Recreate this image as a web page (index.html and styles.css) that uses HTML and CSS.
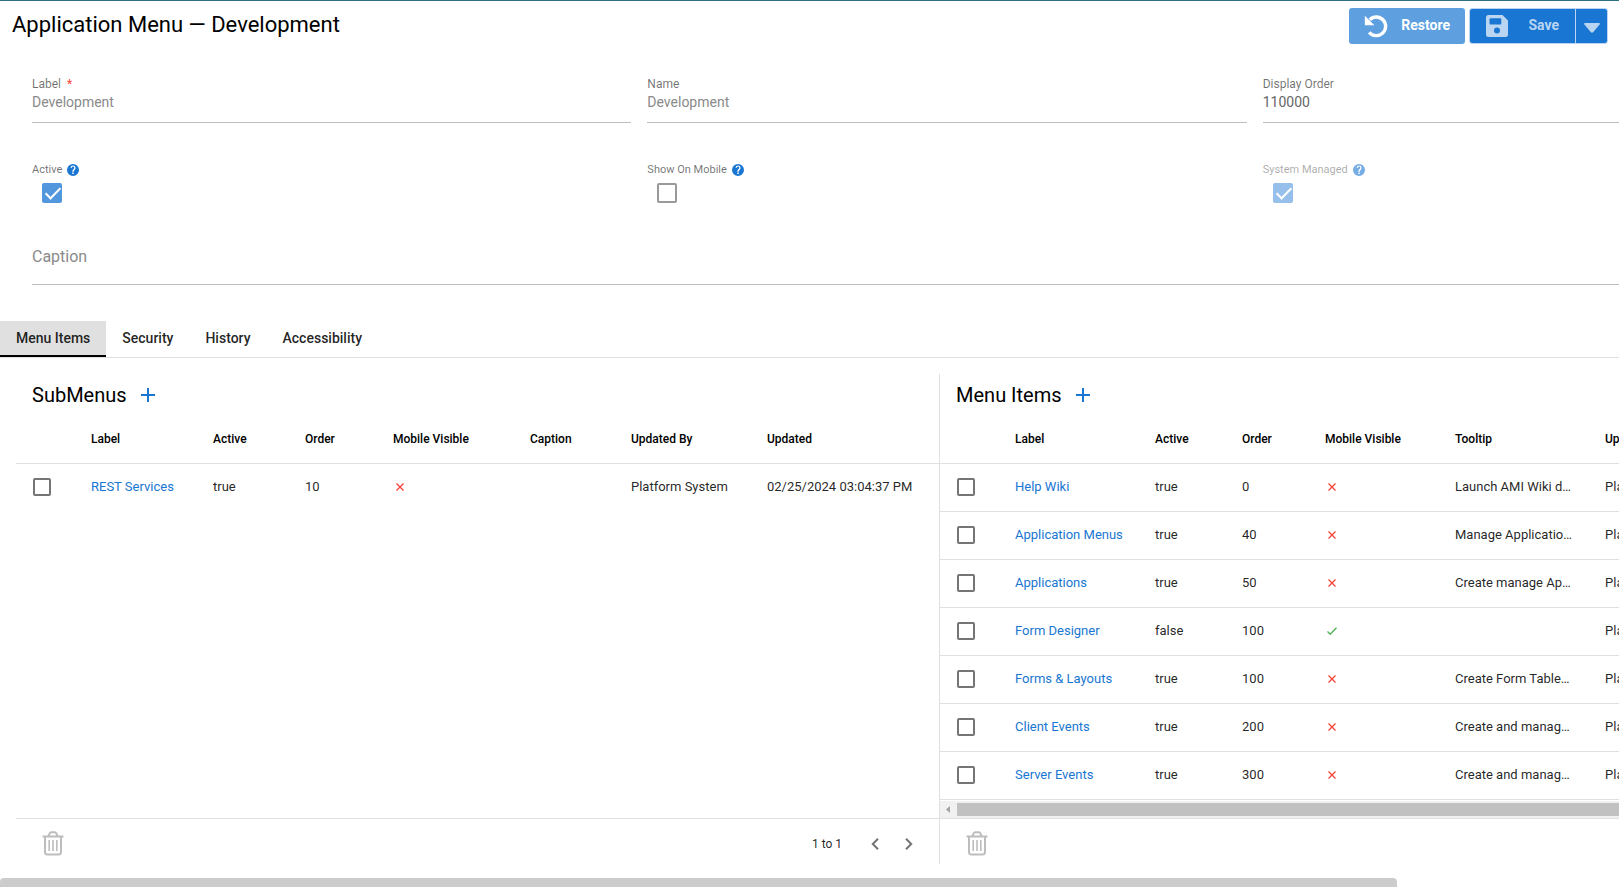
FILE: index.html
```html
<!DOCTYPE html>
<html lang="en">
<head>
<meta charset="utf-8">
<title>Application Menu — Development</title>
<link rel="stylesheet" href="styles.css">
</head>
<body>
<svg class="sprite" aria-hidden="true">
  <symbol id="help" viewBox="0 0 24 24"><path d="M12 0a12 12 0 1 0 0 24 12 12 0 0 0 0-24zm1.500 20h-3v-3h3zm3-9.200-1.300 1.300c-1.100 1.100-1.700 1.900-1.700 3.600h-3v-.8c0-1.500.6-2.800 1.700-3.900l1.600-1.700c.5-.4.8-1 .8-1.700a2.400 2.400 0 0 0-4.800 0H6.900a5.200 5.200 0 0 1 10.300 0c0 1.200-.4 2.300-1.200 3.200z"/></symbol>
  <symbol id="plus" viewBox="0 0 14 14"><path d="M7 0v14M0 7h14" fill="none" stroke="currentColor" stroke-width="2"/></symbol>
  <symbol id="cross" viewBox="0 0 8 8"><path d="M.5.5l7 7M7.500.5l-7 7" fill="none" stroke="currentColor" stroke-width="1.300"/></symbol>
  <symbol id="tick" viewBox="0 0 10 8"><path d="M.5 4.500l2.700 2.700L9.500.8" fill="none" stroke="currentColor" stroke-width="1.300"/></symbol>
  <symbol id="trash" viewBox="0 0 22 25"><path d="M.5 5.500h21M3 5.500V21a2.600 2.600 0 0 0 2.600 2.600h10.800A2.600 2.600 0 0 0 19 21V5.500M6.500 5l1-2.400Q8 1.200 9.500 1.200h3q1.500 0 2 1.400l1 2.400" fill="none" stroke="currentColor" stroke-width="2"/><path d="M7.200 9v11M11 9v11M14.800 9v11" fill="none" stroke="currentColor" stroke-width="1.600"/></symbol>
  <symbol id="prev" viewBox="0 0 8 12"><path d="M7 .8L1.800 6 7 11.200" fill="none" stroke="currentColor" stroke-width="2"/></symbol>
  <symbol id="next" viewBox="0 0 8 12"><path d="M1 .8L6.200 6 1 11.200" fill="none" stroke="currentColor" stroke-width="2"/></symbol>
</svg>

<header class="topbar">
  <h1>Application Menu — Development</h1>
  <div class="actions">
    <button class="btn restore" type="button">
      <svg width="24" height="24" viewBox="0 0 24 24"><path d="M5.800 5.700A9.300 9.300 0 1 1 5.200 18.300" fill="none" stroke="currentColor" stroke-width="3.400"/><path d="M.8 1.700v9.600h9.600z" fill="currentColor"/></svg>
      <span>Restore</span>
    </button>
    <div class="split">
      <button class="btn save" type="button">
        <svg width="22" height="22" viewBox="0 0 22 22"><path fill="currentColor" fill-rule="evenodd" d="M2.500 0h14L22 5.500v14a2.500 2.500 0 0 1-2.500 2.500h-17A2.500 2.500 0 0 1 0 19.500v-17A2.500 2.500 0 0 1 2.500 0zM4.500 3.200a1 1 0 0 0-1 1v4.300a1 1 0 0 0 1 1h9.800a1 1 0 0 0 1-1V4.200a1 1 0 0 0-1-1zM11 12.500a3 3 0 1 0 0 6 3 3 0 0 0 0-6z"/></svg>
        <span>Save</span>
      </button>
      <button class="btn more" type="button" aria-label="More save options">
        <svg width="16" height="10" viewBox="0 0 16 10"><path fill="currentColor" d="M1 0h14q1.500.2.600 1.500L9.300 9q-1.300 1.300-2.600 0L.4 1.500Q-.5.2 1 0z"/></svg>
      </button>
    </div>
  </div>
</header>

<main class="viewport">
  <div class="content">
    <form class="form">
      <div class="field"><label for="label">Label <span class="req">*</span></label><input id="label" type="text" value="Development" disabled></div>
      <div class="field"><label for="name">Name</label><input id="name" type="text" value="Development" disabled></div>
      <div class="field strong"><label for="order">Display Order</label><input id="order" type="text" value="110000"></div>
      <div class="toggle"><label for="active">Active <svg class="help"><use href="#help"/></svg></label><input class="box" id="active" type="checkbox" checked></div>
      <div class="toggle"><label for="mobile">Show On Mobile <svg class="help"><use href="#help"/></svg></label><input class="box" id="mobile" type="checkbox"></div>
      <div class="toggle faded"><label for="system">System Managed <svg class="help"><use href="#help"/></svg></label><input class="box" id="system" type="checkbox" checked disabled></div>
      <input class="caption" type="text" placeholder="Caption" aria-label="Caption">
    </form>

    <nav class="tabs" role="tablist">
      <button type="button" role="tab" aria-selected="true">Menu Items</button>
      <button type="button" role="tab" aria-selected="false">Security</button>
      <button type="button" role="tab" aria-selected="false">History</button>
      <button type="button" role="tab" aria-selected="false">Accessibility</button>
    </nav>

    <div class="panels">
      <section class="panel">
        <div class="panel-head"><h2>SubMenus</h2><button type="button" aria-label="Add submenu"><svg width="14" height="14"><use href="#plus"/></svg></button></div>
        <div class="panel-body">
          <table class="submenus">
            <colgroup><col class="c-check"><col class="s-label"><col class="s-active"><col class="s-order"><col class="s-mobile"><col class="s-caption"><col class="s-by"><col></colgroup>
            <thead><tr><th></th><th>Label</th><th>Active</th><th>Order</th><th>Mobile Visible</th><th>Caption</th><th>Updated By</th><th>Updated</th></tr></thead>
            <tbody>
              <tr><td><input class="box" type="checkbox" aria-label="Select REST Services"></td><td><a href="#">REST Services</a></td><td>true</td><td>10</td><td><svg class="cross"><use href="#cross"/></svg></td><td></td><td>Platform System</td><td>02/25/2024 03:04:37 PM</td></tr>
            </tbody>
          </table>
        </div>
        <footer class="panel-foot">
          <button class="trash" type="button" aria-label="Delete"><svg width="22" height="25"><use href="#trash"/></svg></button>
          <div class="pager"><span>1 to 1</span><button type="button" aria-label="Previous page"><svg width="8" height="12"><use href="#prev"/></svg></button><button type="button" aria-label="Next page"><svg width="8" height="12"><use href="#next"/></svg></button></div>
        </footer>
      </section>

      <section class="panel">
        <div class="panel-head"><h2>Menu Items</h2><button type="button" aria-label="Add menu item"><svg width="14" height="14"><use href="#plus"/></svg></button></div>
        <div class="panel-body">
          <table class="items">
            <colgroup><col class="c-check"><col class="i-label"><col class="i-active"><col class="i-order"><col class="i-mobile"><col class="i-tip"><col></colgroup>
            <thead><tr><th></th><th>Label</th><th>Active</th><th>Order</th><th>Mobile Visible</th><th>Tooltip</th><th>Updated By</th></tr></thead>
            <tbody>
              <tr><td><input class="box" type="checkbox" aria-label="Select Help Wiki"></td><td><a href="#">Help Wiki</a></td><td>true</td><td>0</td><td><svg class="cross"><use href="#cross"/></svg></td><td>Launch AMI Wiki d…</td><td>Platform System</td></tr>
              <tr><td><input class="box" type="checkbox" aria-label="Select Application Menus"></td><td><a href="#">Application Menus</a></td><td>true</td><td>40</td><td><svg class="cross"><use href="#cross"/></svg></td><td>Manage Applicatio…</td><td>Platform System</td></tr>
              <tr><td><input class="box" type="checkbox" aria-label="Select Applications"></td><td><a href="#">Applications</a></td><td>true</td><td>50</td><td><svg class="cross"><use href="#cross"/></svg></td><td>Create manage Ap…</td><td>Platform System</td></tr>
              <tr><td><input class="box" type="checkbox" aria-label="Select Form Designer"></td><td><a href="#">Form Designer</a></td><td>false</td><td>100</td><td><svg class="tick"><use href="#tick"/></svg></td><td></td><td>Platform System</td></tr>
              <tr><td><input class="box" type="checkbox" aria-label="Select Forms &amp; Layouts"></td><td><a href="#">Forms &amp; Layouts</a></td><td>true</td><td>100</td><td><svg class="cross"><use href="#cross"/></svg></td><td>Create Form Table…</td><td>Platform System</td></tr>
              <tr><td><input class="box" type="checkbox" aria-label="Select Client Events"></td><td><a href="#">Client Events</a></td><td>true</td><td>200</td><td><svg class="cross"><use href="#cross"/></svg></td><td>Create and manag…</td><td>Platform System</td></tr>
              <tr><td><input class="box" type="checkbox" aria-label="Select Server Events"></td><td><a href="#">Server Events</a></td><td>true</td><td>300</td><td><svg class="cross"><use href="#cross"/></svg></td><td>Create and manag…</td><td>Platform System</td></tr>
            </tbody>
          </table>
        </div>
        <div class="hscroll"><svg width="17" height="13" viewBox="0 0 17 13"><path d="M10 3v7L6 6.500z" fill="#a3a3a3"/></svg><div class="hthumb"></div></div>
        <footer class="panel-foot">
          <button class="trash" type="button" aria-label="Delete"><svg width="22" height="25"><use href="#trash"/></svg></button>
        </footer>
      </section>
    </div>
  </div>
</main>
<div class="page-scroll"><div class="page-thumb"></div></div>
</body>
</html>
```
FILE: styles.css
```css
* { box-sizing: border-box; }

body {
  margin: 0;
  min-height: 100vh;
  display: flex;
  flex-direction: column;
  overflow: hidden;
  border-top: 1px solid #2f6f86;
  background: #fff;
  color: rgba(0, 0, 0, 0.87);
  font: 13px/20px Roboto, sans-serif;
}

.sprite { display: none; }
svg { display: block; }
button, input { font: inherit; color: inherit; }
button { border: 0; padding: 0; background: none; cursor: pointer; }

/* header */
.topbar {
  display: flex;
  justify-content: space-between;
  padding: 7px 11px 0 12px;
}
h1, h2 {
  margin: 0;
  color: #000;
  font-size: 20px;
  font-weight: 400;
  line-height: 34px;
}
h1 { font-size: 22px; }
.actions { display: flex; gap: 4px; }
.btn {
  display: flex;
  align-items: center;
  justify-content: space-between;
  height: 36px;
  background: #1976d2;
  font-size: 14px;
  font-weight: 700;
}
.btn span { padding-bottom: 2px; }
.restore {
  width: 116px;
  padding: 0 15px;
  border-radius: 3px;
  background: #5e9fe0;
  color: #fff;
}
.split {
  display: flex;
  overflow: hidden;
  height: 36px;
  border: 1px solid #bad5f2;
  border-radius: 3px;
  color: #bad5f2;
}
.split .btn { height: 34px; }
.save { width: 105px; padding: 0 16px; }
.more {
  width: 32px;
  justify-content: center;
  padding-top: 4px;
  border-left: 1px solid #bad5f2;
}

/* content wider than the window */
.viewport { flex: 1; display: flex; overflow: hidden; }
.content {
  flex: none;
  width: 116%;
  display: flex;
  flex-direction: column;
}

/* form */
.form {
  display: grid;
  grid-template-columns: repeat(3, 1fr);
  column-gap: 16px;
  padding: 30px 16px 0 32px;
  color: rgba(0, 0, 0, 0.56);
}
.field { border-bottom: 1px solid #bdbdbd; height: 49px; }
.field label { display: block; font-size: 12px; line-height: 20px; }
.field input {
  display: block;
  width: 100%;
  height: 16px;
  padding: 0;
  border: 0;
  background: none;
  color: #8a8a8a;
  font-size: 14px;
}
.field.strong input { color: #666; }
.req { margin-left: 3px; color: #f44336; }

.toggle { padding-top: 37px; height: 96px; }
.toggle label {
  display: flex;
  align-items: center;
  gap: 5px;
  font-size: 11px;
  line-height: 20px;
}
.help { width: 12px; height: 12px; fill: #1976d2; }
.faded { opacity: 0.6; }

.box {
  display: block;
  appearance: none;
  width: 18px;
  height: 18px;
  margin: 0;
  border: 2px solid #757575;
  border-radius: 2px;
}
td .box { margin-left: 1px; }
.toggle .box { width: 20px; height: 20px; margin: 3px 0 0 10px; border-color: #999; }
.toggle .box:checked { border: 0; background: #5297de; }
.toggle .box:checked::before {
  content: "";
  display: block;
  width: 6px;
  height: 13px;
  margin: 1px 0 0 7px;
  border: solid #fff;
  border-width: 0 2px 2px 0;
  transform: rotate(45deg);
}

.caption {
  grid-column: 1 / -1;
  height: 66px;
  padding: 10px 0 0;
  border: 0;
  border-bottom: 1px solid #bdbdbd;
  background: none;
  font-size: 16px;
}
.caption::placeholder { color: #8a8a8a; opacity: 1; }

/* tabs */
.tabs {
  display: flex;
  margin-top: 36px;
  border-bottom: 1px solid #e0e0e0;
}
.tabs button {
  height: 36px;
  padding: 0 16px;
  border-bottom: 2px solid transparent;
  font-size: 14px;
  font-weight: 500;
}
.tabs [aria-selected="true"] {
  background: #e0e0e0;
  border-color: #000;
}

/* panels */
.panels {
  flex: 1;
  display: grid;
  grid-template-columns: 1fr 1fr;
  padding: 16px 16px 14px;
}
.panel { display: flex; flex-direction: column; min-width: 0; }
.panel + .panel { border-left: 1px solid #e0e0e0; }
.panel-head {
  display: flex;
  align-items: center;
  gap: 14px;
  height: 42px;
  padding-left: 16px;
}
.panel-head button { color: #1976d2; }
.panel-body { flex: 1; }

table { width: 100%; table-layout: fixed; border-collapse: collapse; }
th, td {
  height: 48px;
  padding: 0 0 0 16px;
  border-bottom: 1px solid #e0e0e0;
  text-align: left;
  white-space: nowrap;
}
th { height: 47px; color: #000; font-size: 12px; font-weight: 500; }
.submenus td { border: 0; }
td a { color: #1976d2; text-decoration: none; }
.c-check { width: 59px; }
.s-label { width: 122px; }
.s-active { width: 92px; }
.s-order { width: 88px; }
.s-mobile { width: 137px; }
.s-caption { width: 101px; }
.s-by { width: 136px; }
.i-label { width: 140px; }
.i-active { width: 87px; }
.i-order { width: 83px; }
.i-mobile { width: 130px; }
.i-tip { width: 150px; }
.cross { width: 8px; height: 8px; margin-left: 3px; color: #f44336; }
.tick { width: 10px; height: 8px; margin-left: 2px; color: #4caf50; }

.hscroll {
  display: flex;
  height: 17px;
  padding: 2px 0;
  background: #f1f1f1;
}
.hthumb { flex: 1; background: #c1c1c1; }

.panel-foot {
  display: flex;
  align-items: center;
  justify-content: space-between;
  height: 46px;
  padding: 4px 26px 0;
  border-top: 1px solid #e0e0e0;
}
.trash { color: #bdbdbd; }
.pager { display: flex; align-items: center; gap: 26px; font-size: 12px; }
.pager button { color: #757575; }
.pager span { margin-right: 3px; }

/* horizontal page scrollbar */
.page-scroll { height: 9px; }
.page-thumb {
  width: calc(100% / 1.159);
  height: 9px;
  border-radius: 4px 4px 0 0;
  background: #ccc;
}
```
